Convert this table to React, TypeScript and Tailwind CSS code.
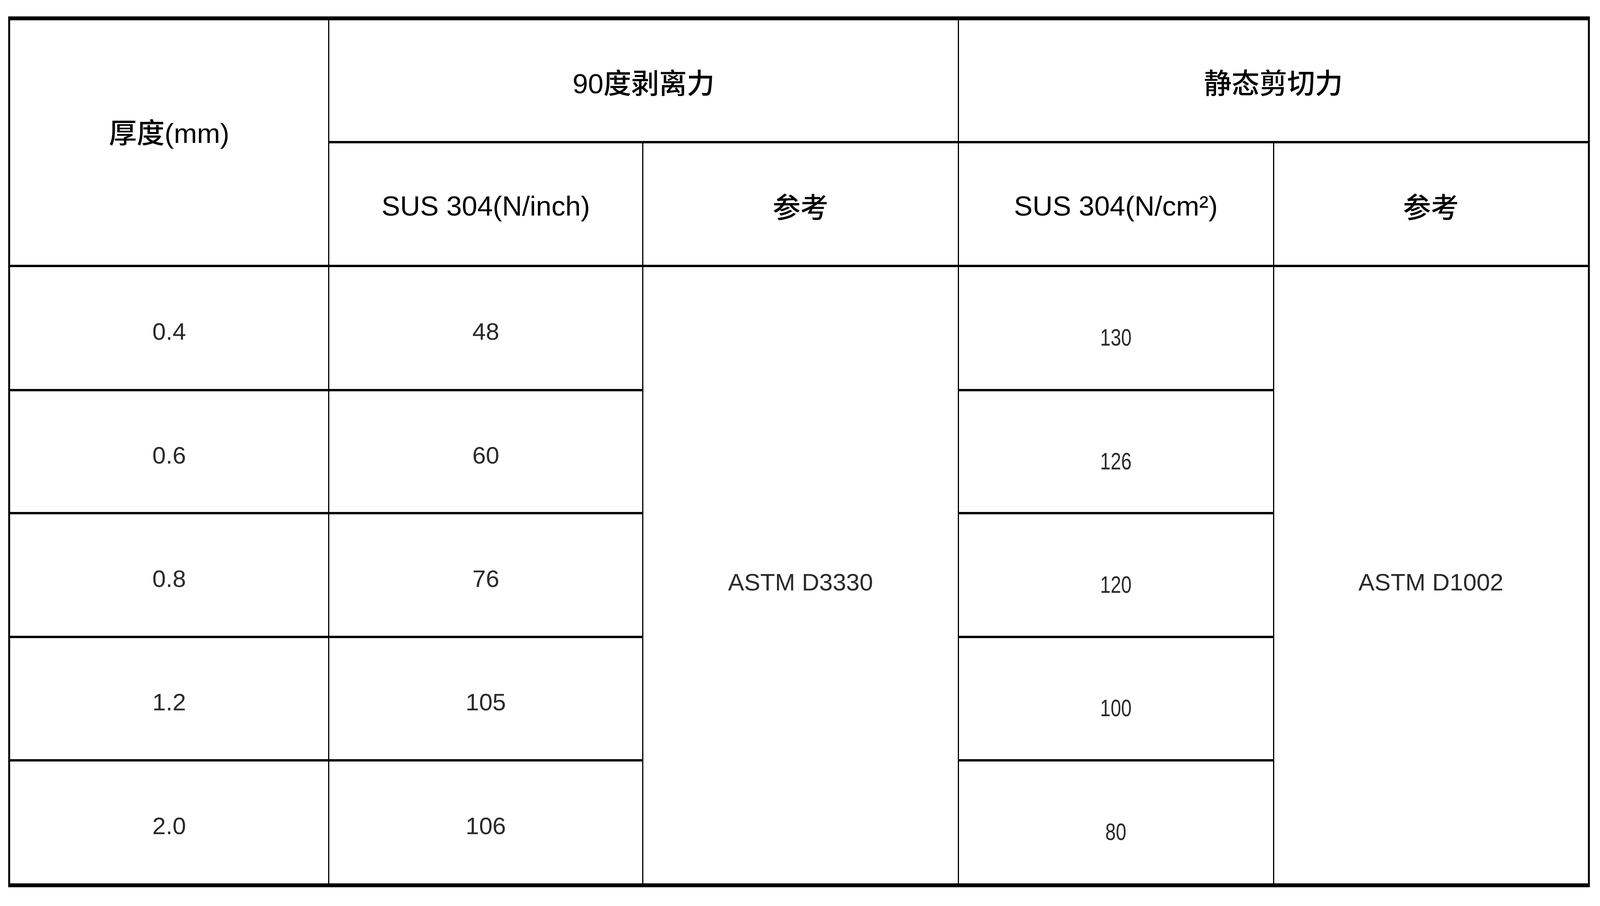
const rows = [
  { thick: "0.4", peel: "48", shear: "130" },
  { thick: "0.6", peel: "60", shear: "126" },
  { thick: "0.8", peel: "76", shear: "120" },
  { thick: "1.2", peel: "105", shear: "100" },
  { thick: "2.0", peel: "106", shear: "80" },
]

// widths follow the window width (vw), heights the window height (vh), so the grid fills the frame like the reference
const rowHeights = ["h-[13.707vh]", "h-[13.578vh]", "h-[13.664vh]", "h-[13.621vh]", "h-[13.578vh]"]

const cell = "border-x-[0.08vw] border-y-[0.259vh] border-black p-0 align-middle"

export default function App() {
  return (
    <div className="min-h-screen w-full overflow-hidden bg-white pt-[1.81vh]">
      <div className="ml-[0.508vw] w-[98.851vw] border-x-[0.14vw] border-y-[0.474vh] border-black">
        <table className="w-full table-fixed border-collapse border-hidden text-center font-['Liberation_Sans','Noto_Sans_CJK_SC',sans-serif]">
          <colgroup>
            <col className="w-[20.206%]" />
            <col className="w-[19.894%]" />
            <col className="w-[20.003%]" />
            <col className="w-[19.975%]" />
            <col className="w-[19.922%]" />
          </colgroup>
          <thead className="text-[1.737vw] leading-[1.15] font-medium text-black">
            <tr className="h-[13.448vh]">
              <th rowSpan={2} className={`${cell} pb-[1.983vh] font-medium`}>
                厚度(mm)
              </th>
              <th colSpan={2} className={`${cell} pt-[0.69vh] font-medium`}>
                90度剥离力
              </th>
              <th colSpan={2} className={`${cell} pt-[0.69vh] font-medium`}>
                静态剪切力
              </th>
            </tr>
            <tr className="h-[13.664vh]">
              <th className={`${cell} pt-[0.431vh] font-normal`}>SUS 304(N/inch)</th>
              <th className={`${cell} pt-[0.862vh] font-medium`}>参考</th>
              <th className={`${cell} pt-[0.431vh] font-normal`}>SUS 304(N/cm²)</th>
              <th className={`${cell} pt-[0.862vh] font-medium`}>参考</th>
            </tr>
          </thead>
          <tbody className="text-[1.51vw] leading-[1.15] text-[#2a2a2a]">
            {rows.map((r, i) => (
              <tr key={r.thick} className={rowHeights[i]}>
                <td className={`${cell} pt-[0.776vh]`}>{r.thick}</td>
                <td className={`${cell} pt-[0.776vh]`}>{r.peel}</td>
                {i === 0 && (
                  <td rowSpan={5} className={`${cell} pt-[1.552vh]`}>
                    ASTM D3330
                  </td>
                )}
                <td className={`${cell} pt-[2.069vh]`}>
                  <span className="inline-block scale-x-[0.78]">{r.shear}</span>
                </td>
                {i === 0 && (
                  <td rowSpan={5} className={`${cell} pt-[1.552vh]`}>
                    ASTM D1002
                  </td>
                )}
              </tr>
            ))}
          </tbody>
        </table>
      </div>
    </div>
  )
}
